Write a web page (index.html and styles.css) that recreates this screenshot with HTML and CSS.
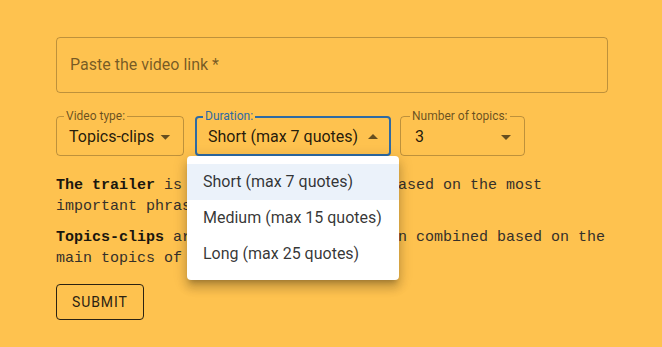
FILE: index.html
```html
<!DOCTYPE html>
<html lang="en">
<head>
    <meta charset="UTF-8">
    <title>Video clips</title>
    <link rel="stylesheet" href="styles.css">
</head>
<body>
<div class="page">
    <div class="link-field">
        <span class="placeholder">Paste the video link *</span>
    </div>

    <div class="selects">
        <div class="select type-select">
            <fieldset><legend>Video type:</legend></fieldset>
            <span class="value">Topics-clips</span>
            <svg class="arrow" viewBox="0 0 24 24"><path d="M7 10l5 5 5-5z"/></svg>
        </div>
        <div class="select duration-select focused">
            <fieldset><legend>Duration:</legend></fieldset>
            <span class="value">Short (max 7 quotes)</span>
            <svg class="arrow" viewBox="0 0 24 24"><path d="M7 14l5-5 5 5z"/></svg>
            <ul class="menu">
                <li class="selected">Short (max 7 quotes)</li>
                <li>Medium (max 15 quotes)</li>
                <li>Long (max 25 quotes)</li>
            </ul>
        </div>
        <div class="select topics-select">
            <fieldset><legend>Number of topics:</legend></fieldset>
            <span class="value">3</span>
            <svg class="arrow" viewBox="0 0 24 24"><path d="M7 10l5 5 5-5z"/></svg>
        </div>
    </div>

    <p class="info"><b>The trailer</b> is a mix of clips chosen based on the most important phrases of the video.</p>
    <p class="info"><b>Topics-clips</b> are clips from video, then combined based on the main topics of the video.</p>

    <button class="submit">Submit</button>
</div>
</body>
</html>
```
FILE: styles.css
```css
* {
    margin: 0;
    padding: 0;
    box-sizing: border-box;
}

body {
    background: #fec24f;
    font-family: Roboto, "Liberation Sans", sans-serif;
    color: rgba(0, 0, 0, 0.87);
}

.page {
    width: 552px;
    margin-left: 56px;
    padding-top: 37px;
}

.link-field {
    height: 56px;
    border: 1px solid rgba(0, 0, 0, 0.25);
    border-radius: 4px;
    display: flex;
    align-items: center;
    padding-left: 13px;
}

.placeholder {
    font-size: 16px;
    color: rgba(0, 0, 0, 0.55);
    margin-top: -2px;
}

.selects {
    display: flex;
    gap: 10px;
    margin-top: 23px;
}

.select {
    position: relative;
    height: 40px;
    display: flex;
    align-items: center;
    padding: 0 14px 0 13px;
}

.type-select { width: 128px; }
.duration-select { width: 196px; margin-left: 1px; }
.topics-select { width: 125px; margin-left: -1px; padding-left: 15px; }

.select fieldset {
    position: absolute;
    left: 0;
    right: 0;
    top: -5px;
    bottom: 0;
    border: 1px solid rgba(0, 0, 0, 0.25);
    border-radius: 4px;
    padding: 0 8px;
    pointer-events: none;
}

.select legend {
    font-size: 12px;
    line-height: 11px;
    padding: 0 2px;
    color: rgba(0, 0, 0, 0.6);
    margin-left: -1px;
}

.topics-select legend {
    margin-left: 1px;
}

.select.focused fieldset {
    border: 2px solid #2e6aa3;
    padding: 0 7px;
}

.select.focused legend {
    color: #2e6aa3;
}

.value {
    font-size: 16px;
    flex: 1;
    white-space: nowrap;
    padding-top: 1px;
}

.arrow {
    width: 24px;
    height: 24px;
    fill: rgba(0, 0, 0, 0.6);
    margin-right: -7px;
    margin-top: 1px;
}

.focused .arrow {
    margin-right: -8px;
}

.menu {
    position: absolute;
    left: -8px;
    top: 40px;
    width: 212px;
    list-style: none;
    background: #fff;
    border-radius: 4px;
    padding: 8px 0;
    box-shadow: 0 5px 5px -3px rgba(0, 0, 0, 0.2), 0 8px 10px 1px rgba(0, 0, 0, 0.14), 0 3px 14px 2px rgba(0, 0, 0, 0.12);
    z-index: 2;
}

.menu li {
    height: 36px;
    line-height: 36px;
    padding-left: 16px;
    font-size: 16px;
    color: rgba(0, 0, 0, 0.8);
}

.menu li.selected {
    background: #ebf2fa;
}

.info {
    font-family: "Liberation Mono", monospace;
    font-size: 15px;
    line-height: 21px;
    color: #35302a;
    margin-top: 10px;
}

.selects + .info {
    margin-top: 19px;
}

.info b {
    color: #1a160e;
}

.submit {
    margin-top: 15px;
    height: 36px;
    padding: 0 15px;
    background: transparent;
    border: 1px solid #2b2212;
    border-radius: 4px;
    font-family: Roboto, "Liberation Sans", sans-serif;
    font-size: 14px;
    text-transform: uppercase;
    letter-spacing: 0.9px;
    color: #2b2212;
}
```
